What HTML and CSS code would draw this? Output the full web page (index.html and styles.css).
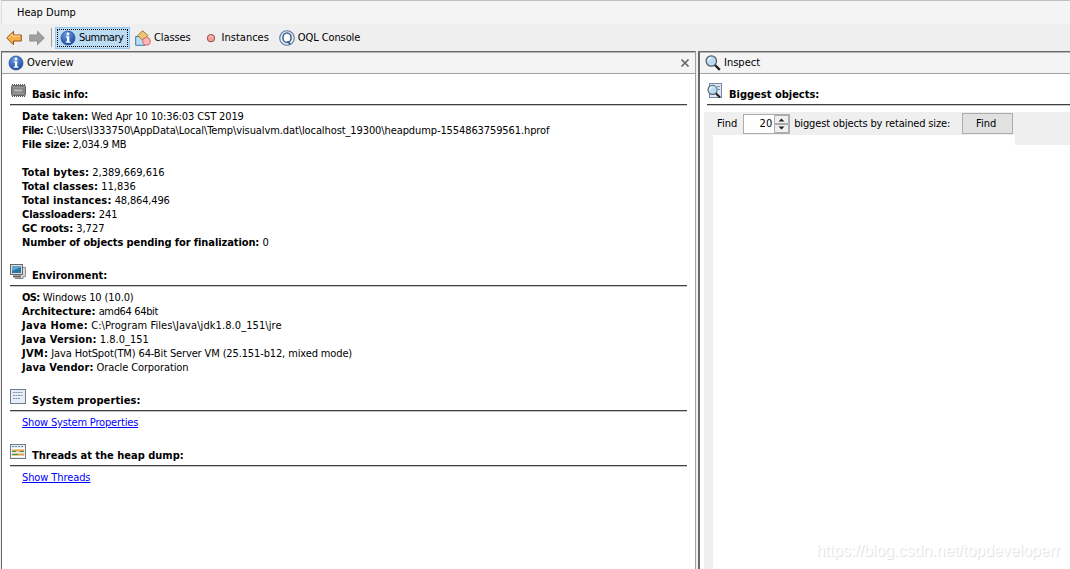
FILE: index.html
```
<!DOCTYPE html>
<html lang="en">
<head>
    <meta charset="UTF-8">
    <title>Heap Dump</title>
    <link rel="stylesheet" href="styles.css">
</head>
<body>
    <div class="window">
        <div class="caption">Heap Dump</div>
        <div class="toolbar">
            <svg class="arrow-left" width="16" height="16" viewBox="0 0 16 16"><path d="M.7 8 7.5 1.3V5H15.3v6H7.5v3.7z" fill="#f6b04a" stroke="#935512"/><path d="M2.5 8 6.5 4v2H14" fill="none" stroke="#ffd99b"/></svg>
            <svg class="arrow-right" width="16" height="16" viewBox="0 0 16 16"><path d="M15.3 8 8.5 1.3V5H.7v6h7.8v3.7z" fill="#a0a0a0" stroke="#909090"/></svg>
            <div class="separator"></div>
            <div class="tool selected">
                <svg width="16" height="16" viewBox="0 0 16 16"><use href="#info"/></svg>
                <span class="t-summary">Summary</span>
            </div>
            <div class="tool classes">
                <svg width="16" height="16" viewBox="0 0 16 16"><path d="M.7 6.5H7L10 15.3H.7z" fill="#b8def5" stroke="#3f78a8"/><path d="M7.5.7 13 5.5 8 10.5 2.6 5.8z" fill="#ecc577" stroke="#a47835"/><circle cx="11.5" cy="11.3" r="3.9" fill="#ffb6b3" stroke="#cf6966"/></svg>
                <span class="t-classes">Classes</span>
            </div>
            <div class="tool instances">
                <svg width="16" height="16" viewBox="0 0 16 16"><circle cx="8" cy="8.2" r="3.7" fill="#f79c96" stroke="#8d5350"/><path d="M5.8 7.3q2-2.6 4.4 0" fill="none" stroke="#ffd3d0"/></svg>
                <span class="t-instances">Instances</span>
            </div>
            <div class="tool oql">
                <svg width="16" height="16" viewBox="0 0 16 16"><circle cx="8" cy="8" r="7.3" fill="#e8eef5" stroke="#56779e" stroke-width="1.1"/><ellipse cx="8" cy="7.7" rx="4.1" ry="4.7" fill="#fff" stroke="#45658f" stroke-width="1.6"/><path d="m8.7 11.5 2.5 2.8" stroke="#304e7b" stroke-width="1.6"/></svg>
                <span class="t-oql">OQL Console</span>
            </div>
        </div>

        <div class="panels">
            <div class="panel overview">
                <div class="panel-title">
                    <svg width="16" height="16" viewBox="0 0 16 16"><use href="#info"/></svg>
                    <span>Overview</span>
                    <svg class="close" width="10" height="10" viewBox="0 0 10 10"><path d="m1.5 1.5 7 7m0-7-7 7" stroke="#666" stroke-width="1.7"/></svg>
                </div>
                <div class="panel-body">
                    <section class="basic">
                        <h2>
                            <svg width="16" height="16" viewBox="0 0 16 16"><path d="M2 1.5h13M2 13.5h13" stroke="#555" stroke-dasharray="1 1"/><rect x="1.5" y="2.5" width="14" height="10" rx="1" fill="#858585" stroke="#666"/><path d="M3 4.5h11M3 10.5h11" stroke="#999"/><path d="M4 7.5h8" stroke="#b8b8b8" stroke-width="2"/></svg>
                            <span class="h-basic">Basic info:</span>
                        </h2>
                        <div class="lines">
                            <p><b class="k-date">Date taken:</b> <span class="v-date">Wed Apr 10 10:36:03 CST 2019</span></p>
                            <p><b class="k-file">File:</b> <span class="v-file">C:\Users\I333750\AppData\Local\Temp\visualvm.dat\localhost_19300\heapdump-1554863759561.hprof</span></p>
                            <p><b class="k-size">File size:</b> <span class="v-size">2,034.9 MB</span></p>
                            <p>&nbsp;</p>
                            <p><b class="k-bytes">Total bytes:</b> <span>2,389,669,616</span></p>
                            <p><b class="k-classes">Total classes:</b> <span>11,836</span></p>
                            <p><b class="k-instances">Total instances:</b> <span class="v-instances">48,864,496</span></p>
                            <p><b class="k-loaders">Classloaders:</b> <span>241</span></p>
                            <p><b class="k-roots">GC roots:</b> <span>3,727</span></p>
                            <p><b class="k-pending">Number of objects pending for finalization:</b> <span>0</span></p>
                        </div>
                    </section>
                    <section class="environment">
                        <h2>
                            <svg width="16" height="16" viewBox="0 0 16 16"><path d="M4 3.5h11.5v9H13v2H5" fill="#ddd" stroke="#888"/><rect x=".5" y=".5" width="12" height="10" fill="#ddd" stroke="#666"/><rect x="2" y="2" width="9" height="7" fill="#2b76ab"/><path d="M2 7 11 3V2H2z" fill="#5fa5d5"/><path d="M3 12.5h8" stroke="#666" stroke-width="2"/></svg>
                            <span>Environment:</span>
                        </h2>
                        <div class="lines">
                            <p><b class="k-os">OS:</b> <span class="v-os">Windows 10 (10.0)</span></p>
                            <p><b>Architecture:</b> <span class="v-arch">amd64 64bit</span></p>
                            <p><b class="k-home">Java Home:</b> <span class="v-home">C:\Program Files\Java\jdk1.8.0_151\jre</span></p>
                            <p><b class="k-version">Java Version:</b> <span>1.8.0_151</span></p>
                            <p><b class="k-jvm">JVM:</b> <span class="v-jvm">Java HotSpot(TM) 64-Bit Server VM (25.151-b12, mixed mode)</span></p>
                            <p><b class="k-vendor">Java Vendor:</b> <span class="v-vendor">Oracle Corporation</span></p>
                        </div>
                    </section>
                    <section class="properties">
                        <h2>
                            <svg width="16" height="16" viewBox="0 0 16 16"><rect x=".5" y=".5" width="15" height="14" fill="#e6eef7" stroke="#717b85"/><path d="M3 3.5h10M3 6.5h10M3 9.5h7" stroke="#8997a6" stroke-dasharray="2 .5"/></svg>
                            <span class="h-props">System properties:</span>
                        </h2>
                        <div class="lines"><a class="l-props" href="#">Show System Properties</a></div>
                    </section>
                    <section class="threads">
                        <h2>
                            <svg width="16" height="16" viewBox="0 0 16 16"><rect x=".5" y=".5" width="15" height="14" fill="#e6eef3" stroke="#717b85"/><path d="M2 2.5h12" stroke="#5d87a9" stroke-dasharray="2 1"/><path d="M2 6.5h12M2 10.5h12" stroke="#e9a64c" stroke-width="2"/><path d="M2 7.5h4m4 0h4M2 10.5h6" stroke="#42963b"/><path d="M1 4.5h14M1 12.5h14" stroke="#fff"/></svg>
                            <span>Threads at the heap dump:</span>
                        </h2>
                        <div class="lines"><a class="l-threads" href="#">Show Threads</a></div>
                    </section>
                </div>
            </div>

            <div class="panel inspect">
                <div class="panel-title">
                    <svg width="16" height="16" viewBox="0 0 16 16"><use href="#glass"/></svg>
                    <span>Inspect</span>
                </div>
                <div class="panel-body">
                    <section>
                        <h2>
                            <svg width="16" height="16" viewBox="0 0 16 16"><rect x="2.5" y=".5" width="12" height="14" fill="#dce8f3" stroke="#7788a0"/><path d="M10 3.5h3M11 6.5h2" stroke="#7d8ea5"/><g transform="translate(0 1.5) scale(.88)"><use href="#glass"/></g></svg>
                            <span>Biggest objects:</span>
                        </h2>
                    </section>
                    <div class="finder">
                        <div class="finder-form">
                            <span>Find</span>
                            <div class="spinner">
                                <span>20</span>
                                <svg width="15" height="18" viewBox="0 0 15 18"><path d="M.5.5h14v8H.5zM.5 9.5h14v8H.5z" fill="#f0f0f0" stroke="#acacac"/><path d="m7.5 3.5 3 3h-6zM7.5 14.5l3-3h-6z" fill="#222"/></svg>
                            </div>
                            <span class="t-size">biggest objects by retained size:</span>
                            <button>Find</button>
                        </div>
                        <div class="results"></div>
                    </div>
                </div>
            </div>
        </div>
        <div class="watermark">https://blog.csdn.net/topdeveloperr</div>
    </div>

    <svg class="defs" width="0" height="0">
        <defs>
            <radialGradient id="blue" cx=".4" cy=".25" r=".8"><stop offset="0" stop-color="#6e9ae0"/><stop offset="1" stop-color="#1846a0"/></radialGradient>
            <g id="info">
                <circle cx="8" cy="8" r="7" fill="url(#blue)" stroke="#2a559f" stroke-width=".8"/>
                <circle cx="8" cy="4" r="1.4" fill="#fff"/>
                <path d="M6 6.3h3.2v5.2h1.3v1.3H5.7v-1.3H7V7.6H6z" fill="#fff"/>
            </g>
            <g id="glass">
                <path d="m9.5 9.5 5.3 5.3" stroke="#222" stroke-width="2.4"/>
                <circle cx="6.3" cy="6" r="5.2" fill="#b9dcf3" stroke="#56616c" stroke-width="1.3"/>
                <path d="M3.4 6q.2-3 3-3.2" fill="none" stroke="#f2faff" stroke-width="1.5"/>
            </g>
        </defs>
    </svg>
</body>
</html>
```
FILE: styles.css
```
* {
    box-sizing: border-box;
}
body {
    margin: 0;
    font-family: "DejaVu Sans Condensed", "DejaVu Sans", sans-serif;
    font-stretch: condensed;
    font-size: 11px;
    line-height: 14px;
    color: #000;
    background: #efefef;
}
.window {
    height: 569px;
    display: flex;
    flex-direction: column;
    overflow: hidden;
    position: relative;
    white-space: nowrap;
}
svg {
    display: block;
    flex: none;
}
.caption {
    height: 24px;
    margin-left: 1px;
    padding: 5px 0 0 15px;
    border-top: 1px solid #bdbdbd;
    border-left: 1px solid #e0e0e0;
    background: #f4f4f4;
}
.toolbar {
    height: 27px;
    display: flex;
    align-items: center;
    padding-left: 6px;
}
.arrow-right {
    margin-left: 7px;
}
.separator {
    width: 1px;
    height: 19px;
    margin: 0 3px 0 6px;
    background: #a0a0a0;
}
.tool {
    display: flex;
    align-items: center;
    gap: 3px;
}
.selected {
    width: 75px;
    height: 22px;
    padding-left: 4px;
    border: 1px solid #90c8f6;
    background: #bcdcf4;
    outline: 1px dotted #000;
    outline-offset: -3px;
}
.classes {
    margin-left: 5px;
}
.instances {
    margin-left: 12px;
}
.oql {
    margin-left: 10px;
}
.panels {
    flex: 1;
    display: flex;
    margin-left: 1px;
}
.panel {
    display: flex;
    flex-direction: column;
    border-top: 1px solid #696969;
    border-left: 1px solid #696969;
    background: #fff;
}
.overview {
    width: 695px;
    border-right: 1px solid #a0a0a0;
}
.inspect {
    flex: 1;
    margin-left: 2px;
    border-left-width: 2px;
}
.panel-title {
    height: 22px;
    display: flex;
    align-items: center;
    gap: 3px;
    padding-left: 6px;
    border-top: 1px solid #b4b4b4;
    border-bottom: 1px solid #a0a0a0;
    background: #f4f4f4;
}
.inspect .panel-title {
    padding-left: 5px;
}
.close {
    margin: 0 5px 0 auto;
}
.overview .panel-body {
    padding: 9px 8px 0;
}
.inspect .panel-body {
    flex: 1;
    display: flex;
    flex-direction: column;
    padding-top: 9px;
}
.inspect section {
    padding-left: 7px;
}
h2 {
    height: 22px;
    display: flex;
    margin: 0;
    border-bottom: 1px solid #404040;
    box-shadow: 0 1px #c8c8c8;
    font-size: 11px;
    line-height: 14px;
}
h2 span {
    margin: 5px 0 0 6px;
}
.lines {
    padding: 5px 0 0 12px;
}
p {
    height: 14px;
    margin: 0;
}
.environment, .properties, .threads {
    margin-top: 14px;
}
a {
    color: #0000ff;
}

/* text widths */
.t-summary { letter-spacing: -0.5px; }
.t-classes, .t-oql { letter-spacing: -0.1px; }
.t-size { letter-spacing: -0.15px; }
.h-basic { letter-spacing: -0.2px; }
.h-props { letter-spacing: 0.1px; }
.k-date { letter-spacing: 0.09px; }
.v-date { letter-spacing: -0.12px; }
.k-file { letter-spacing: -0.6px; }
.v-file { letter-spacing: -0.1px; }
.k-size { letter-spacing: -0.2px; }
.v-size { letter-spacing: -0.25px; }
.k-bytes { letter-spacing: 0.16px; }
.k-classes { letter-spacing: 0.1px; }
.k-instances { letter-spacing: 0.12px; }
.v-instances { letter-spacing: -0.15px; }
.k-loaders { letter-spacing: -0.08px; }
.k-roots { letter-spacing: -0.1px; }
.k-pending { letter-spacing: -0.09px; }
.k-os { letter-spacing: -0.6px; }
.v-os { letter-spacing: -0.12px; }
.v-arch { letter-spacing: -0.35px; }
.k-home { letter-spacing: 0.3px; }
.v-home { letter-spacing: 0.08px; }
.k-version { letter-spacing: 0.15px; }
.k-jvm { letter-spacing: 0.25px; }
.v-jvm { letter-spacing: -0.13px; }
.k-vendor { letter-spacing: 0.08px; }
.v-vendor { letter-spacing: -0.11px; }
.l-props { letter-spacing: -0.17px; }
.l-threads { letter-spacing: -0.1px; }

.finder {
    flex: 1;
    display: flex;
    flex-direction: column;
    margin-top: 7px;
    padding-left: 4px;
}
.finder-form {
    height: 23px;
    display: flex;
    align-items: center;
    padding-left: 13px;
    background: #efefef;
}
.spinner {
    width: 47px;
    height: 20px;
    display: flex;
    align-items: center;
    justify-content: flex-end;
    gap: 2px;
    margin: 0 4px 0 6px;
    border: 1px solid #acacac;
    background: #fff;
}
button {
    width: 51px;
    height: 21px;
    margin-left: 12px;
    padding: 0 3px 0 0;
    border: 1px solid #acacac;
    background: #e1e1e1;
    font: inherit;
}
.results {
    flex: 1;
    border-left: 9px solid #efefef;
}
.results::before {
    content: "";
    display: block;
    width: 55px;
    height: 10px;
    margin-left: auto;
    background: #efefef;
}
.watermark {
    position: absolute;
    right: 10px;
    bottom: 8px;
    font: 16px/20px "Liberation Sans", Arial, sans-serif;
    letter-spacing: -0.05px;
    color: #fff;
    text-shadow: 1px 1px #e2e2e2;
}
.defs {
    position: absolute;
}
```
